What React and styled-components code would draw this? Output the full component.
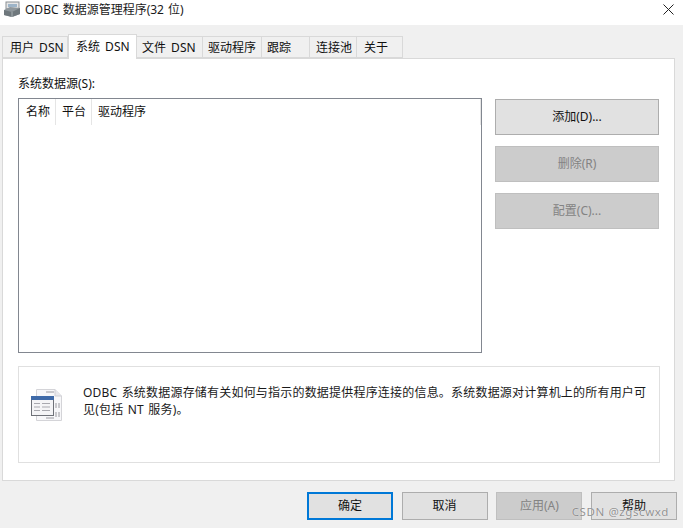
import React from 'react';
import styled, { createGlobalStyle } from 'styled-components';

const GlobalStyle = createGlobalStyle`
  html, body { margin: 0; padding: 0; background: #f0f0f0; }
  body { font-family: "Noto Sans", "Noto Sans CJK SC", sans-serif; font-size: 12px; color: #111; }
`;

const Dialog = styled.div`
  position: relative;
  width: 683px;
  height: 528px;
  overflow: hidden;
  background: #f0f0f0;
`;

const TitleBar = styled.div`
  box-sizing: border-box;
  height: 25px;
  background: #fff;
  display: flex;
  align-items: center;
  padding: 0 9px 6px 3px;
  gap: 4px;
  font-size: 12px;
  word-spacing: 1px;
  color: #1a1a1a;
`;

const TitleText = styled.span`
  flex: 1;
  line-height: 19px;
`;

const TabRow = styled.div`
  display: flex;
  align-items: flex-end;
  height: 33px;
  padding: 0 0 0 2px;
  box-sizing: border-box;
`;

const Tab = styled.div`
  box-sizing: border-box;
  width: ${p => p.$w}px;
  height: ${p => (p.$active ? 25 : 22)}px;
  margin: ${p => (p.$active ? '0 0 -1px 0' : '0')};
  padding: 0 0 ${p => (p.$active ? 2 : 0)}px ${p => p.$pad}px;
  display: flex;
  align-items: center;
  background: ${p => (p.$active ? '#fff' : '#f0f0f0')};
  border: 1px solid #d9d9d9;
  border-left-width: ${p => (p.$active || p.$first ? 1 : 0)}px;
  border-bottom-width: ${p => (p.$active ? 0 : 1)}px;
  position: relative;
  white-space: pre;
  word-spacing: 2px;
`;

const Panel = styled.div`
  box-sizing: border-box;
  width: 673px;
  height: 423px;
  margin-left: 2px;
  background: #fff;
  border: 1px solid #d9d9d9;
  padding: 17px 14px 0 15px;
`;

const GroupLabel = styled.div`
  height: 22px;
  line-height: 16px;
`;

const ListRow = styled.div`
  display: flex;
  gap: 13px;
  height: 255px;
`;

const SourceList = styled.div`
  box-sizing: border-box;
  width: 464px;
  height: 255px;
  border: 1px solid #828790;
  background: #fff;
`;

const ListHeader = styled.div`
  display: flex;
  height: 26px;
`;

const Column = styled.div`
  box-sizing: border-box;
  width: ${p => p.$w}px;
  padding-left: ${p => p.$pad}px;
  line-height: 26px;
  border-right: 1px solid #e5e5e5;
`;

const ButtonColumn = styled.div`
  display: flex;
  flex-direction: column;
  gap: 11px;
  padding-top: 1px;
`;

const Button = styled.div`
  box-sizing: border-box;
  width: ${p => p.$w}px;
  height: ${p => p.$h}px;
  padding-bottom: 2px;
  display: flex;
  align-items: center;
  justify-content: center;
  background: ${p => (p.$disabled ? '#cccccc' : '#e1e1e1')};
  color: ${p => (p.$disabled ? '#838383' : '#111')};
  border: ${p => (p.$primary ? '2px solid #0078d7' : `1px solid ${p.$disabled ? '#bfbfbf' : '#adadad'}`)};
`;

const InfoBox = styled.div`
  box-sizing: border-box;
  width: 642px;
  height: 97px;
  margin-top: 13px;
  border: 1px solid #e0e0e0;
  display: flex;
  padding: 17px 0 0 11px;
`;

const InfoIcon = styled.svg`
  flex: none;
  width: 34px;
  height: 36px;
  margin-top: 5px;
`;

const InfoText = styled.div`
  margin: 0 0 0 19px;
  width: 568px;
  line-height: 17px;
  letter-spacing: 0.2px;
  word-spacing: 1px;
  color: #1a1a1a;
`;

const Footer = styled.div`
  display: flex;
  justify-content: flex-end;
  gap: 8.7px;
  padding: 11px 6px 0 0;
`;

const Watermark = styled.div`
  position: absolute;
  right: 14px;
  bottom: 8px;
  font-size: 11.5px;
  line-height: 16px;
  letter-spacing: 0.6px;
  color: rgba(110, 110, 110, 0.75);
  text-shadow: 0 0 1px rgba(255, 255, 255, 0.9);
`;

const AppIcon = () => (
  <svg width="18" height="17" viewBox="0 0 18 17">
    <rect x="3" y="1" width="13" height="7" fill="#e6e6e6" stroke="#8a8f94" />
    <rect x="5" y="3" width="9" height="3" fill="#9db4c8" />
    <path d="M1 9 L7 6 L17 7 L17 13 L9 16 L1 14 Z" fill="#8f979c" />
    <path d="M1 9 L9 11 L17 7 L17 13 L9 16 L1 14 Z" fill="#6f787d" />
    <path d="M9 11 V16" stroke="#a9b1b5" />
  </svg>
);

const CloseIcon = () => (
  <svg width="11" height="11" viewBox="0 0 11 11">
    <path d="M0.5 0.5 L10.5 10.5 M10.5 0.5 L0.5 10.5" stroke="#222" fill="none" />
  </svg>
);

const TableIcon = () => (
  <InfoIcon viewBox="0 0 34 36">
    <path d="M6.5 0.5 H25 L31.5 7 V31.5 H6.5 Z" fill="#f7f7f9" stroke="#d4d4d8" />
    <path d="M25 0.5 V7 H31.5" fill="#e8e8ec" stroke="#cfcfd4" />
    <path d="M16 3 h8 M26 14 v5 M29 14 v5 M26 23 v5 M29 23 v5 M16 29 h8" stroke="#9a9aa0" />
    <rect x="1.5" y="7.5" width="22" height="19" fill="#f4f4f6" stroke="#6e7178" />
    <rect x="1" y="7" width="23" height="4" fill="#3f6aa8" />
    <path d="M4 14.5 h6 M12 14.5 h8 M4 18 h6 M12 18 h8 M4 21.5 h6 M12 21.5 h8" stroke="#a8a8ae" />
  </InfoIcon>
);

const tabs = [
  { label: '用户 DSN', w: 66, pad: 7, first: true },
  { label: '系统 DSN', w: 69, pad: 7, active: true },
  { label: '文件 DSN', w: 66, pad: 5 },
  { label: '驱动程序', w: 59, pad: 5 },
  { label: '跟踪', w: 48, pad: 5 },
  { label: '连接池', w: 47, pad: 6 },
  { label: '关于', w: 46, pad: 7 },
];

const columns = [
  { label: '名称', w: 37, pad: 7 },
  { label: '平台', w: 36, pad: 6 },
  { label: '驱动程序', w: 389, pad: 6 },
];

const App = () => (
  <Dialog>
    <GlobalStyle />
    <TitleBar>
      <AppIcon />
      <TitleText>ODBC 数据源管理程序(32 位)</TitleText>
      <CloseIcon />
    </TitleBar>
    <TabRow>
      {tabs.map(t => (
        <Tab key={t.label} $w={t.w} $pad={t.pad} $active={t.active} $first={t.first}>{t.label}</Tab>
      ))}
    </TabRow>
    <Panel>
      <GroupLabel>系统数据源(S):</GroupLabel>
      <ListRow>
        <SourceList>
          <ListHeader>
            {columns.map(c => (
              <Column key={c.label} $w={c.w} $pad={c.pad}>{c.label}</Column>
            ))}
          </ListHeader>
        </SourceList>
        <ButtonColumn>
          <Button $w={164} $h={36}>添加(D)...</Button>
          <Button $w={164} $h={36} $disabled>删除(R)</Button>
          <Button $w={164} $h={36} $disabled>配置(C)...</Button>
        </ButtonColumn>
      </ListRow>
      <InfoBox>
        <TableIcon />
        <InfoText>ODBC 系统数据源存储有关如何与指示的数据提供程序连接的信息。系统数据源对计算机上的所有用户可见(包括 NT 服务)。</InfoText>
      </InfoBox>
    </Panel>
    <Footer>
      <Button $w={86} $h={28} $primary>确定</Button>
      <Button $w={86} $h={28}>取消</Button>
      <Button $w={86} $h={28} $disabled>应用(A)</Button>
      <Button $w={86} $h={28}>帮助</Button>
    </Footer>
    <Watermark>CSDN @zgscwxd</Watermark>
  </Dialog>
);

export default App;
